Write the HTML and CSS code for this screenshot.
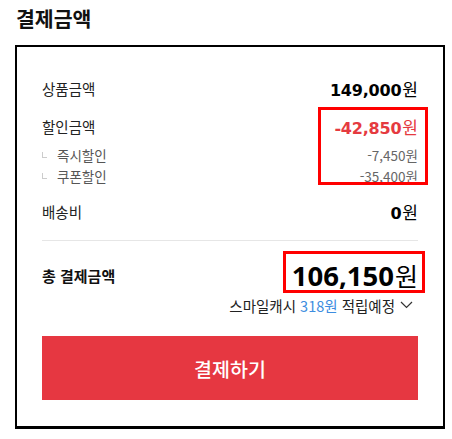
FILE: index.html
```html
<!DOCTYPE html>
<html lang="ko">
<head>
<meta charset="utf-8">
<link rel="stylesheet" href="styles.css">
</head>
<body>
<h2 class="title">결제금액</h2>
<div class="card">
  <div class="row">
    <span class="label">상품금액</span>
    <span class="value"><span class="num">149,000</span><span class="won">원</span></span>
  </div>
  <div class="row row-discount">
    <span class="label">할인금액</span>
    <span class="value red"><span class="num">-42,850</span><span class="won">원</span></span>
  </div>
  <div class="sub first">
    <span class="sub-label"><span class="mark"></span>즉시할인</span>
    <span class="sub-value">-7,450원</span>
  </div>
  <div class="sub">
    <span class="sub-label"><span class="mark"></span>쿠폰할인</span>
    <span class="sub-value">-35,400원</span>
  </div>
  <div class="row row-ship">
    <span class="label">배송비</span>
    <span class="value"><span class="num">0</span><span class="won">원</span></span>
  </div>
  <div class="divider"></div>
  <div class="row total">
    <span class="label strong">총 결제금액</span>
    <span class="value"><span class="big">106,150</span><span class="big-won">원</span></span>
  </div>
  <div class="cash">
    <span>스마일캐시 <span class="blue">318원</span> 적립예정</span>
    <svg class="chev" width="13" height="8" viewBox="0 0 13 8"><path d="M1 1 L6.5 6.5 L12 1" fill="none" stroke="#333" stroke-width="1.2"/></svg>
  </div>
  <button class="pay">결제하기</button>
  <div class="hl hl-discount"></div>
  <div class="hl hl-total"></div>
</div>
</body>
</html>
```

FILE: styles.css
```css
* { box-sizing: border-box; }
body {
  margin: 0;
  padding: 4px 7px 0 15px;
  font-family: "Noto Sans CJK KR", "Noto Sans", sans-serif;
  color: #222;
  background: #fff;
}
.title {
  margin: 0 0 12px 1px;
  font-size: 20.5px;
  line-height: 29px;
  font-weight: 700;
  color: #111;
}
.card {
  position: relative;
  width: 430px;
  height: 384px;
  border: 2px solid #000;
  border-bottom-width: 3px;
  padding: 31px 25px 0 25px;
}
.row {
  display: flex;
  justify-content: space-between;
  align-items: center;
  height: 20px;
}
.row-discount { margin-top: 18px; }
.row-ship { margin-top: 15px; }
.label {
  font-size: 14.5px;
  color: #222;
}
.label.strong { font-weight: 700; font-size: 15px; color: #111; }
.value {
  display: flex;
  align-items: baseline;
  color: #000;
}
.num {
  font-family: "DejaVu Sans", sans-serif;
  font-weight: 700;
  font-size: 16px;
  letter-spacing: -0.2px;
}
.won {
  font-size: 17px;
  margin-left: 1px;
}
.red { color: #e53a40; }
.sub {
  display: flex;
  justify-content: space-between;
  align-items: center;
  height: 20px;
  font-size: 13px;
  color: #666;
}
.sub.first { margin-top: 9px; }
.sub + .sub { margin-top: 1px; }
.sub-label {
  display: flex;
  align-items: center;
  color: #555;
  font-size: 13.5px;
}
.mark {
  width: 5px;
  height: 6px;
  border-left: 1px solid #ccc;
  border-bottom: 1px solid #ccc;
  margin: 0 10px 0 0;
}
.sub-value { color: #666; font-size: 13.5px; }
.divider {
  height: 1px;
  background: #e6e6e6;
  margin-top: 19px;
}
.total {
  height: 36px;
  margin-top: 16px;
}
.big {
  font-family: "Open Sans", sans-serif;
  font-weight: 700;
  font-size: 27.5px;
  color: #000;
}
.big-won {
  font-size: 25px;
  color: #000;
  margin-left: 1px;
}
.cash {
  display: flex;
  justify-content: flex-end;
  align-items: center;
  gap: 5px;
  height: 18px;
  margin-top: 3px;
  padding-right: 5px;
  font-size: 14.5px;
  color: #222;
}
.blue { color: #3d8de0; }
.chev { display: block; }
.pay {
  display: block;
  width: 100%;
  height: 64px;
  margin-top: 22px;
  border: 0;
  background: #e63741;
  color: #fff;
  font-family: "Noto Sans CJK KR", sans-serif;
  font-size: 19.5px;
  font-weight: 500;
}
.hl {
  position: absolute;
  border: 3px solid #ff0000;
}
.hl-discount {
  left: 301px;
  top: 60px;
  width: 110px;
  height: 78px;
}
.hl-total {
  left: 266px;
  top: 204px;
  width: 142px;
  height: 42px;
}
```
